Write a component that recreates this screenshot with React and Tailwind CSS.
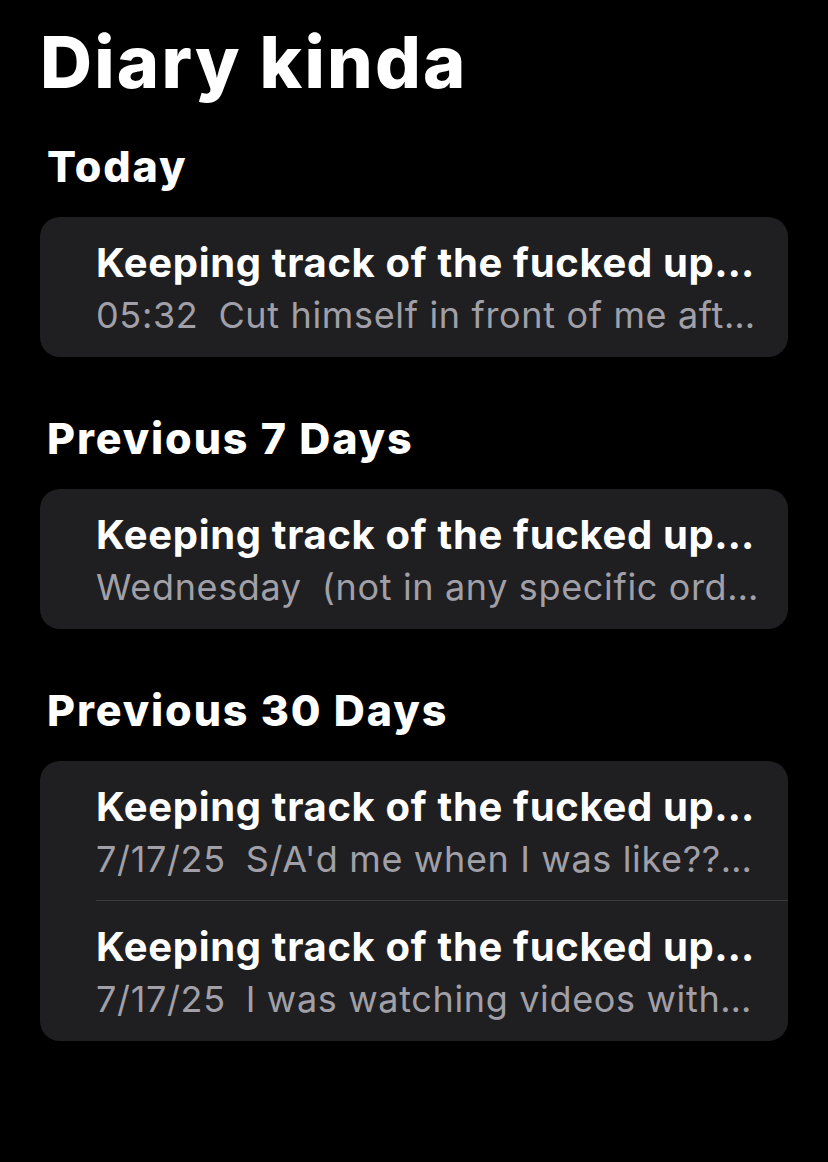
import React from "react";

const sections = [
  {
    label: "Today",
    notes: [{ date: "05:32", preview: "Cut himself in front of me aft…" }],
  },
  {
    label: "Previous 7 Days",
    notes: [{ date: "Wednesday", preview: "(not in any specific ord…" }],
  },
  {
    label: "Previous 30 Days",
    notes: [
      { date: "7/17/25", preview: "S/A'd me when I was like??…" },
      { date: "7/17/25", preview: "I was watching videos with…" },
    ],
  },
];

function NoteRow({ note, last }) {
  return (
    <div className="pl-[56px]">
      <div className={last ? "pt-[20px] pb-[16px]" : "pt-[20px] pb-[15px] border-b border-[#3a3a3c]"}>
        <div className="text-[40px] leading-[52px] font-bold text-white whitespace-nowrap tracking-[0.66px]">
          Keeping track of the fucked up…
        </div>
        <div className="text-[36px] leading-[52px] text-[#a1a0a8] whitespace-nowrap tracking-[0.65px]">
          {note.date}
          <span className="inline-block w-[20px]" />
          {note.preview}
        </div>
      </div>
    </div>
  );
}

export default function App() {
  return (
    <div
      className="min-h-[1162px] w-[828px] bg-black text-white px-[40px] pt-[22px]"
      style={{ fontFamily: "Inter, 'Noto Sans', sans-serif" }}
    >
      <h1 className="text-[72px] leading-[80px] font-extrabold tracking-[2.2px]">Diary kinda</h1>
      <div className="mt-[39px]">
        {sections.map((s, i) => (
          <div key={s.label} className={i === 0 ? "" : "mt-[56px]"}>
            <div className="pl-[7px] text-[43px] leading-[50px] font-extrabold tracking-[1.9px]">{s.label}</div>
            <div className="mt-[26px] bg-[#1f1f21] rounded-[20px] overflow-hidden">
              {s.notes.map((n, j) => (
                <NoteRow key={j} note={n} last={j === s.notes.length - 1} />
              ))}
            </div>
          </div>
        ))}
      </div>
    </div>
  );
}
